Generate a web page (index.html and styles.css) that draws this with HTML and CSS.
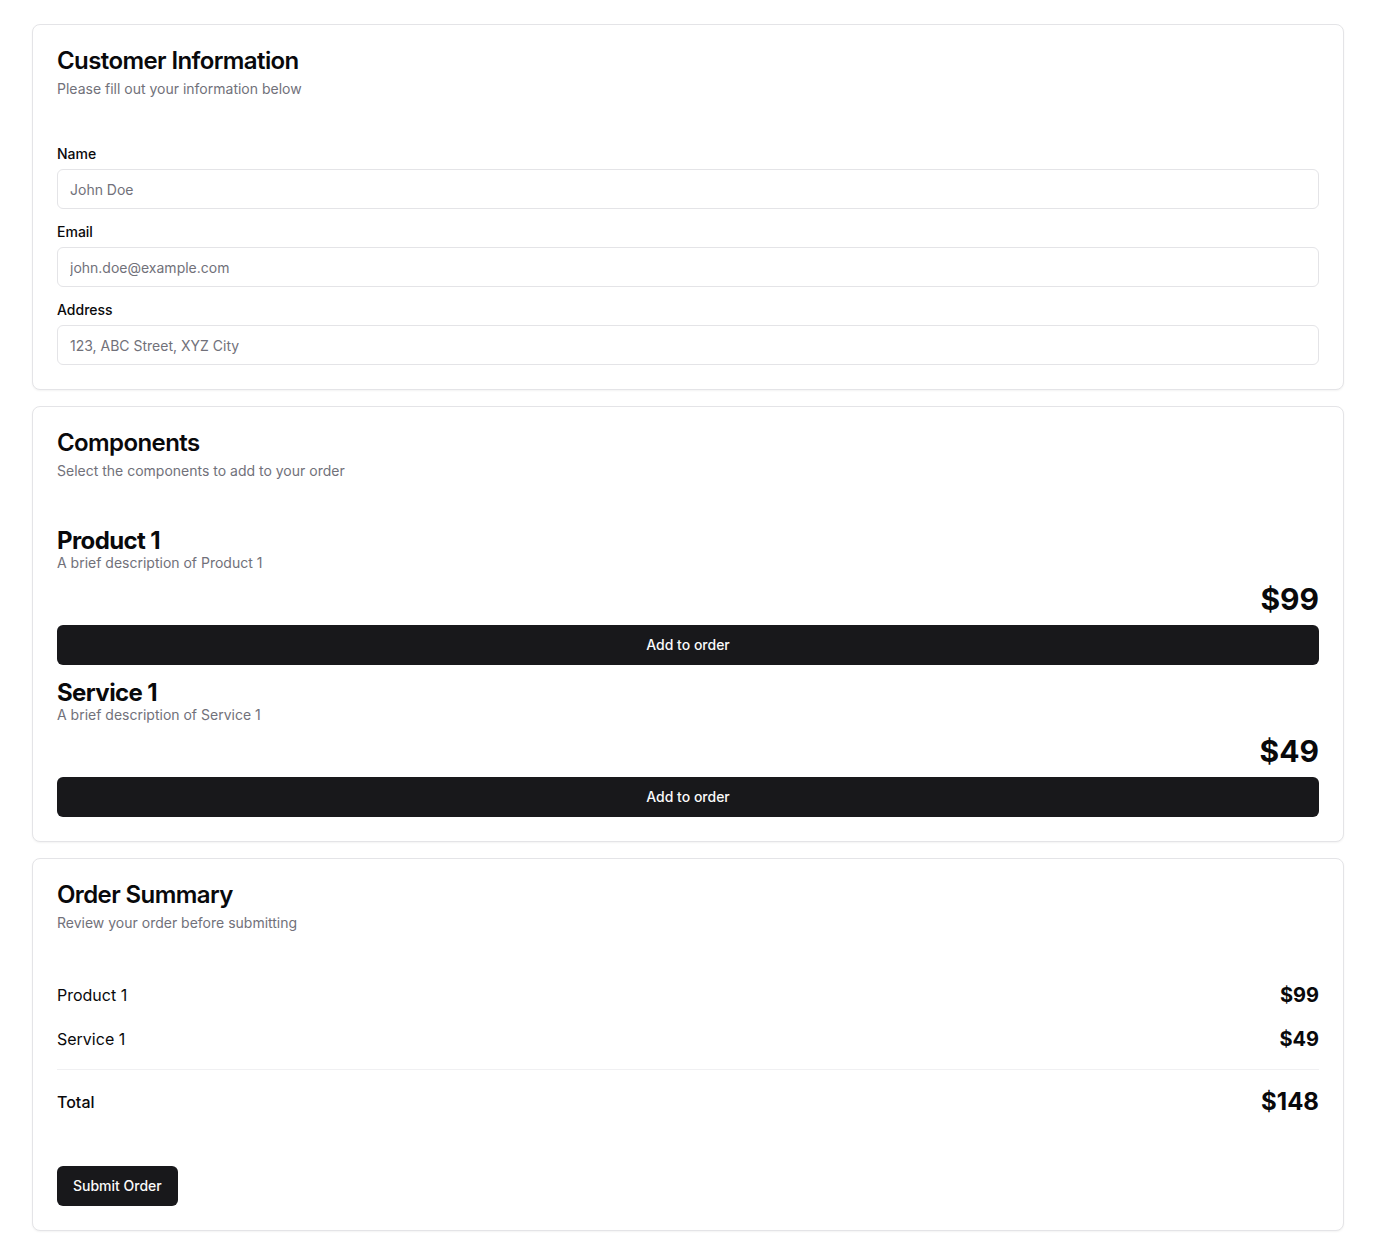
FILE: index.html
```html
<!DOCTYPE html>
<html lang="en">
<head>
<meta charset="utf-8">
<title>Order</title>
<link rel="stylesheet" href="styles.css">
</head>
<body>
<main class="page">
  <section class="card">
    <header class="card-header">
      <h2 class="card-title">Customer Information</h2>
      <p class="card-desc">Please fill out your information below</p>
    </header>
    <div class="card-content form">
      <div class="field">
        <label class="label" for="name">Name</label>
        <input class="input" id="name" placeholder="John Doe">
      </div>
      <div class="field">
        <label class="label" for="email">Email</label>
        <input class="input" id="email" placeholder="john.doe@example.com">
      </div>
      <div class="field">
        <label class="label" for="address">Address</label>
        <input class="input" id="address" placeholder="123, ABC Street, XYZ City">
      </div>
    </div>
  </section>

  <section class="card">
    <header class="card-header">
      <h2 class="card-title">Components</h2>
      <p class="card-desc">Select the components to add to your order</p>
    </header>
    <div class="card-content items">
      <div class="item">
        <h3 class="item-title">Product 1</h3>
        <p class="card-desc">A brief description of Product 1</p>
        <div class="item-price">$99</div>
        <button class="btn btn-full">Add to order</button>
      </div>
      <div class="item">
        <h3 class="item-title">Service 1</h3>
        <p class="card-desc">A brief description of Service 1</p>
        <div class="item-price">$49</div>
        <button class="btn btn-full">Add to order</button>
      </div>
    </div>
  </section>

  <section class="card">
    <header class="card-header">
      <h2 class="card-title">Order Summary</h2>
      <p class="card-desc">Review your order before submitting</p>
    </header>
    <div class="card-content summary">
      <div class="row">
        <span class="row-name">Product 1</span>
        <span class="row-price">$99</span>
      </div>
      <div class="row">
        <span class="row-name">Service 1</span>
        <span class="row-price">$49</span>
      </div>
      <div class="divider"></div>
      <div class="row total">
        <span class="total-name">Total</span>
        <span class="total-price">$148</span>
      </div>
    </div>
    <footer class="card-footer">
      <button class="btn">Submit Order</button>
    </footer>
  </section>
</main>
</body>
</html>
```

FILE: styles.css
```css
* { box-sizing: border-box; }
html, body { margin: 0; padding: 0; background: #ffffff; }
body {
  font-family: Inter, "Noto Sans", "Liberation Sans", sans-serif;
  color: #09090b;
  -webkit-font-smoothing: antialiased;
}
.page {
  padding: 24px 32px;
  display: flex;
  flex-direction: column;
  gap: 16px;
}
.card {
  border: 1px solid #e4e4e7;
  border-radius: 8px;
  background: #fff;
  box-shadow: 0 1px 2px rgba(0,0,0,0.05);
}
.card-header {
  padding: 24px;
  display: flex;
  flex-direction: column;
  gap: 6px;
}
.card-title {
  margin: 0;
  font-size: 24px;
  line-height: 24px;
  font-weight: 600;
  letter-spacing: -0.025em;
}
.card-desc {
  margin: 0;
  font-size: 14px;
  line-height: 20px;
  color: #71717a;
}
.card-content { padding: 24px; }
.card-footer { padding: 24px; display: flex; }

.form { display: flex; flex-direction: column; gap: 16px; }
.field { display: flex; flex-direction: column; gap: 8px; }
.label { font-size: 14px; line-height: 14px; font-weight: 500; }
.input {
  height: 40px;
  width: 100%;
  border: 1px solid #e4e4e7;
  border-radius: 6px;
  padding: 8px 12px;
  font-family: inherit;
  font-size: 14px;
  color: #09090b;
  background: #fff;
  outline: none;
}
.input::placeholder { color: #71717a; }

.items { display: flex; flex-direction: column; gap: 16px; }
.item { display: flex; flex-direction: column; }
.item-title {
  margin: 0;
  font-size: 24px;
  line-height: 24px;
  font-weight: 700;
  letter-spacing: -0.025em;
}
.item-price {
  margin-top: 8px;
  text-align: right;
  font-size: 30px;
  line-height: 36px;
  font-weight: 700;
}
.btn {
  height: 40px;
  padding: 0 16px;
  border: none;
  border-radius: 6px;
  background: #18181b;
  color: #fafafa;
  font-family: inherit;
  font-size: 14px;
  font-weight: 500;
  line-height: 20px;
  cursor: pointer;
}
.btn-full { width: 100%; margin-top: 8px; }

.summary { display: flex; flex-direction: column; gap: 16px; }
.row { display: flex; justify-content: space-between; align-items: center; }
.row-name { font-size: 16px; line-height: 28px; }
.row-price { font-size: 20px; line-height: 28px; font-weight: 700; }
.divider { height: 1px; background: #f0f0f2; }
.total-name { font-size: 16px; line-height: 32px; font-weight: 500; }
.total-price { font-size: 24px; line-height: 32px; font-weight: 700; }
```
